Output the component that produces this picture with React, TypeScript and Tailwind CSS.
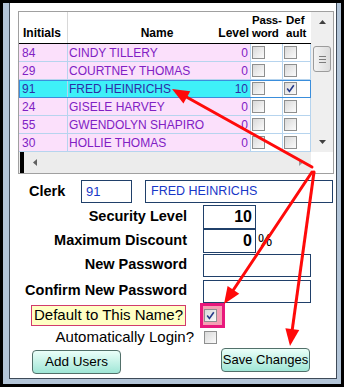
import React from 'react';

const rows = [
  { ini: '84', name: 'CINDY TILLERY', level: '0', def: false },
  { ini: '29', name: 'COURTNEY THOMAS', level: '0', def: false },
  { ini: '91', name: 'FRED HEINRICHS', level: '10', def: true, sel: true },
  { ini: '24', name: 'GISELE HARVEY', level: '0', def: false },
  { ini: '55', name: 'GWENDOLYN SHAPIRO', level: '0', def: false },
  { ini: '30', name: 'HOLLIE THOMAS', level: '0', def: false },
];

function Check({ checked }: { checked?: boolean }) {
  return (
    <div className="w-[13px] h-[13px] border border-[#8e8f8f] bg-linear-to-br from-[#d9d9d9] to-[#fbfbfb] flex items-center justify-center">
      {checked && (
        <svg width="9" height="9" viewBox="0 0 9 9">
          <path d="M1.2 4.6 L3.4 7.4 L7.8 1.2" stroke="#263a8a" strokeWidth="1.6" fill="none" />
        </svg>
      )}
    </div>
  );
}

// red callout arrow, tip at (x2,y2)
function Arrow({ x1, y1, x2, y2 }: { x1: number; y1: number; x2: number; y2: number }) {
  const dx = x2 - x1;
  const dy = y2 - y1;
  const len = Math.sqrt(dx * dx + dy * dy);
  const ux = dx / len;
  const uy = dy / len;
  const hl = 17;
  const hw = 7;
  const bx = x2 - ux * hl;
  const by = y2 - uy * hl;
  const pts = `${x2},${y2} ${bx - uy * hw},${by + ux * hw} ${bx + uy * hw},${by - ux * hw}`;
  return (
    <g>
      <line x1={x1} y1={y1} x2={bx + ux * 2} y2={by + uy * 2} stroke="#ff0a0a" strokeWidth="3" strokeLinecap="round" />
      <polygon points={pts} fill="#ff0a0a" />
    </g>
  );
}

export default function App() {
  return (
    <div className="w-[344px] h-[387px] bg-black pt-[3px] px-[3px] pb-[3px] font-['Liberation_Sans',Arial,sans-serif] relative overflow-hidden">
      <div className="h-full border-l-[6px] border-r-[4px] border-b-[5px] border-[#b3c5d8]">
        <div className="h-full bg-white border-l border-r border-b border-[#3e4a58] pl-[8px] pt-[8px]">
          {/* grid */}
          <div className="w-[316px] h-[163px] border border-[#a0a0a0] flex">
            <div className="w-[292px] flex flex-col">
              <div className="h-[32px] flex border-b border-black text-[12px] font-bold text-black leading-[13px]">
                <div className="w-[49px] border-r border-[#d8d8d8] flex items-end pl-[4px] pb-[3px]">Initials</div>
                <div className="w-[148px] flex items-end justify-center pb-[3px] pl-[30px]">Name</div>
                <div className="w-[35px] flex items-end justify-end pr-[2px] pb-[3px]">Level</div>
                <div className="w-[32px] flex flex-col justify-end pb-[3px] pl-[1px] text-[11.5px] tracking-[-0.2px]">
                  <span>Pass-</span>
                  <span>word</span>
                </div>
                <div className="w-[28px] flex flex-col justify-end pb-[3px] pl-[3px] text-[11.5px]">
                  <span>Def</span>
                  <span>ault</span>
                </div>
              </div>
              {rows.map((r) => (
                <div key={r.ini} className="h-[18px] flex relative text-[12px] leading-none">
                  <div className={`w-[49px] border-r border-b border-[#b6d4ee] flex items-center pl-[3px] ${r.sel ? 'bg-[#3ef0f8] text-[#2e2ea6]' : 'bg-[#fbe0fb] text-[#8020c4]'}`}>{r.ini}</div>
                  <div className={`w-[148px] border-b border-[#b6d4ee] flex items-center pl-[1px] whitespace-nowrap ${r.sel ? 'bg-[#3ef0f8] text-[#2e2ea6]' : 'bg-[#fbe0fb] text-[#8020c4]'}`}>{r.name}</div>
                  <div className={`w-[35px] border-r border-b border-[#b6d4ee] flex items-center justify-end pr-[2px] ${r.sel ? 'bg-[#3ef0f8] text-[#2e2ea6]' : 'bg-[#fbe0fb] text-[#8020c4]'}`}>{r.level}</div>
                  <div className="w-[32px] border-r border-b border-[#b6d4ee] flex items-center pl-[1px] bg-white">
                    <Check />
                  </div>
                  <div className="w-[28px] border-r border-b border-[#b6d4ee] flex items-center pl-[1px] bg-white">
                    <Check checked={r.def} />
                  </div>
                  {r.sel && <div className="absolute inset-0 border border-[#3a8edc] pointer-events-none" />}
                </div>
              ))}
              <div className="h-[21px] bg-[#ececec] flex items-center">
                <div className="w-[4px] h-full bg-black ml-[1px]" />
                <svg width="5" height="7" viewBox="0 0 5 7" className="ml-[9px]">
                  <polygon points="4,0 4,7 0,3.5" fill="#606060" />
                </svg>
                <div className="flex-1" />
                <svg width="4" height="7" viewBox="0 0 4 7" className="mr-[8px]">
                  <polygon points="0,0 0,7 4,3.5" fill="#9a9a9a" />
                </svg>
              </div>
            </div>
            <div className="w-[22px] flex flex-col">
              <div className="h-[140px] bg-[#efefef] flex flex-col items-center">
                <div className="h-[20px] flex items-center justify-center">
                  <svg width="7" height="4" viewBox="0 0 7 4">
                    <polygon points="0,4 7,4 3.5,0" fill="#404040" />
                  </svg>
                </div>
                <div className="h-[14px]" />
                <div className="w-[18px] h-[26px] rounded-[3px] border border-[#9c9c9c] bg-linear-to-r from-[#f4f4f4] to-[#dcdcdc] flex flex-col items-center justify-center gap-[2px]">
                  <div className="w-[7px] h-px bg-[#7c7c7c]" />
                  <div className="w-[7px] h-px bg-[#7c7c7c]" />
                  <div className="w-[7px] h-px bg-[#7c7c7c]" />
                </div>
                <div className="flex-1" />
                <div className="h-[20px] flex items-center justify-center">
                  <svg width="7" height="4" viewBox="0 0 7 4">
                    <polygon points="0,0 7,0 3.5,4" fill="#404040" />
                  </svg>
                </div>
              </div>
              <div className="flex-1 bg-white" />
            </div>
          </div>

          {/* form */}
          <div className="-ml-[8px] mt-[6px] text-black">
            <div className="h-[23px] flex items-center pl-[19px]">
              <div className="w-[52px] text-[14.5px] font-bold">Clerk</div>
              <div className="w-[51px] h-[23px] border border-[#20406a] flex items-center pl-[4px] text-[13px] text-[#1838c8]">91</div>
              <div className="ml-[13px] w-[188px] h-[23px] border border-[#20406a] flex items-center pl-[5px] text-[12.5px] text-[#1838c8]">FRED HEINRICHS</div>
            </div>
            <div className="mt-[2px] h-[24px] flex items-center">
              <div className="w-[177px] text-right text-[14.5px] font-bold">Security Level</div>
              <div className="ml-[16px] w-[53px] h-[24px] border border-[#20406a] flex items-center justify-end pr-[3px] text-[16px] font-bold">10</div>
            </div>
            <div className="h-[24px] flex items-center">
              <div className="w-[177px] text-right text-[14.5px] font-bold">Maximum Discount</div>
              <div className="ml-[16px] w-[53px] h-[24px] border border-[#20406a] flex items-center justify-end pr-[3px] text-[16px] font-bold">0</div>
              <span className="ml-[2px] text-[16px]">%</span>
            </div>
            <div className="h-[24px] flex items-center">
              <div className="w-[177px] text-right text-[14.5px] font-bold">New Password</div>
              <div className="ml-[16px] w-[108px] h-[23px] border border-[#20406a]" />
            </div>
            <div className="mt-[2px] h-[24px] flex items-center">
              <div className="w-[177px] text-right text-[14.5px] font-bold">Confirm New Password</div>
              <div className="ml-[16px] w-[108px] h-[23px] border border-[#20406a]" />
            </div>
            <div className="h-[25px] flex items-center">
              <div className="w-[176px] flex justify-end">
                <div className="h-[21px] px-[2px] border border-[#d23a6c] bg-[#ffffc4] flex items-center text-[15px] whitespace-nowrap">Default to This Name?</div>
              </div>
              <div className="ml-[14px] w-[25px] h-[25px] border-[3px] border-[#e8187c] bg-[#f4a0b4] flex items-center pl-[1px]">
                <Check checked />
              </div>
            </div>
            <div className="mt-[2px] h-[15px] flex items-center">
              <div className="w-[184px] text-right text-[15px] whitespace-nowrap">Automatically Login?</div>
              <div className="ml-[10px]">
                <Check />
              </div>
            </div>
            <div className="mt-[3px] flex items-start">
              <button className="ml-[22px] mt-[2px] w-[89px] h-[24px] rounded-[4px] border border-[#52706a] bg-linear-to-b from-[#eafff9] to-[#9fe6d6] text-[13.5px] text-black whitespace-nowrap">
                Add Users
              </button>
              <button className="ml-[100px] w-[89px] h-[24px] rounded-[4px] border border-[#52706a] bg-linear-to-b from-[#eafff9] to-[#9fe6d6] text-[13px] text-black whitespace-nowrap">
                Save Changes
              </button>
            </div>
          </div>
        </div>
      </div>

      <svg className="absolute left-0 top-0 pointer-events-none" width="344" height="387">
        <Arrow x1={312} y1={167} x2={172} y2={89} />
        <Arrow x1={312} y1={172} x2={224} y2={304} />
        <Arrow x1={314} y1={172} x2={290} y2={346} />
      </svg>
    </div>
  );
}
